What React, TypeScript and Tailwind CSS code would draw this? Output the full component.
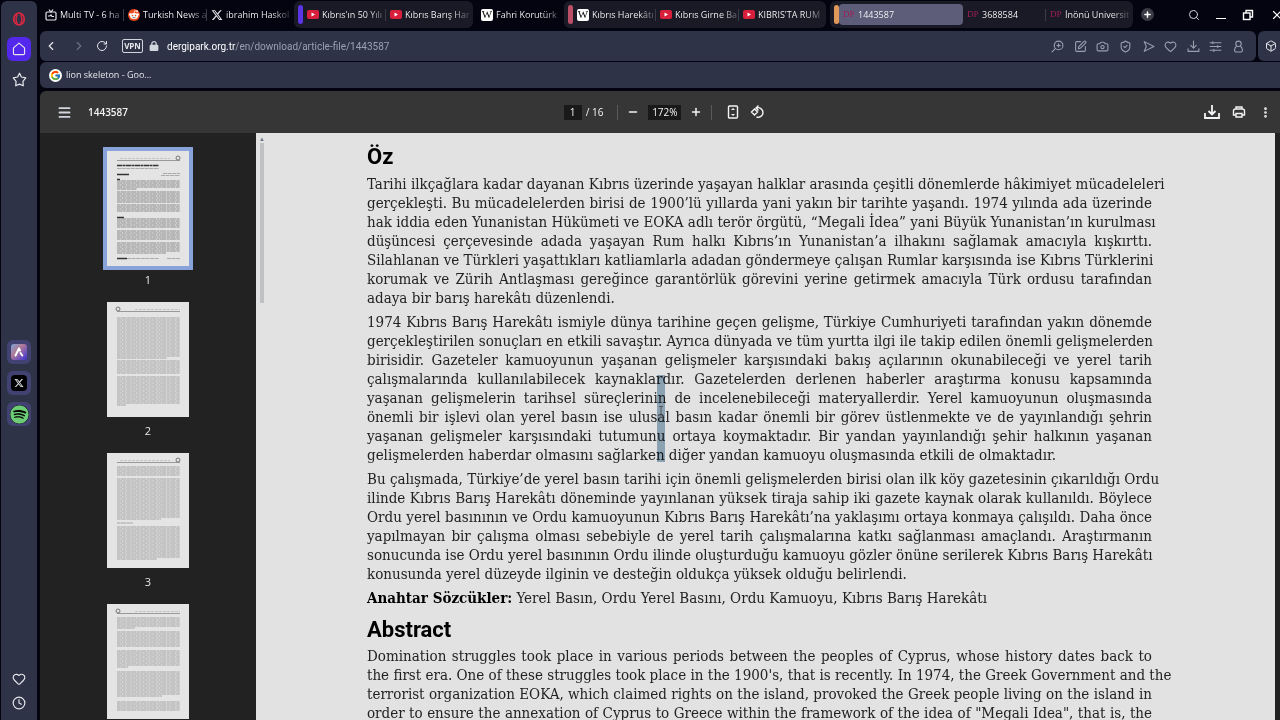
import type { ReactNode } from "react";
import {
  Box,
  Camera,
  ChevronLeft,
  ChevronRight,
  Clock,
  EllipsisVertical,
  Heart,
  Menu,
  Minus,
  Plus,
  RotateCw,
  Search,
  ShieldCheck,
  SquarePen,
  X,
} from "lucide-react";
import { FaLock, FaSpotify, FaXTwitter } from "react-icons/fa6";
import { FcGoogle } from "react-icons/fc";

type Site = "tv" | "reddit" | "x" | "youtube" | "wiki" | "dp";

type Tab = { site: Site; title: string; active?: boolean; divider?: boolean };

const looseTabs: Tab[] = [
  { site: "tv", title: "Multi TV - 6 ha", divider: true },
  { site: "reddit", title: "Turkish News a", divider: true },
  { site: "x", title: "ibrahim Haskol" },
];

const purpleTabs: Tab[] = [
  { site: "youtube", title: "Kıbrıs'ın 50 Yılı", divider: true },
  { site: "youtube", title: "Kıbrıs Barış Har" },
];

const roseTabs: Tab[] = [
  { site: "wiki", title: "Kıbrıs Harekâtı", divider: true },
  { site: "youtube", title: "Kıbrıs Girne Ba", divider: true },
  { site: "youtube", title: "KIBRIS'TA RUM" },
];

const orangeTabs: Tab[] = [
  { site: "dp", title: "1443587", active: true },
  { site: "dp", title: "3688584", divider: true },
  { site: "dp", title: "İnönü Universit" },
];

const ozLines = [
  "Tarihi ilkçağlara kadar dayanan Kıbrıs üzerinde yaşayan halklar arasında çeşitli dönemlerde hâkimiyet mücadeleleri",
  "gerçekleşti. Bu mücadelelerden birisi de 1900’lü yıllarda yani yakın bir tarihte yaşandı. 1974 yılında ada üzerinde",
  "hak iddia eden Yunanistan Hükümeti ve EOKA adlı terör örgütü, “Megali İdea” yani Büyük Yunanistan’ın kurulması",
  "düşüncesi çerçevesinde adada yaşayan Rum halkı Kıbrıs’ın Yunanistan’a ilhakını sağlamak amacıyla kışkırttı.",
  "Silahlanan ve Türkleri yaşattıkları katliamlarla adadan göndermeye çalışan Rumlar karşısında ise Kıbrıs Türklerini",
  "korumak ve Zürih Antlaşması gereğince garantörlük görevini yerine getirmek amacıyla Türk ordusu tarafından",
  "adaya bir barış harekâtı düzenlendi.",
];

const pressLines = [
  "1974 Kıbrıs Barış Harekâtı ismiyle dünya tarihine geçen gelişme, Türkiye Cumhuriyeti tarafından yakın dönemde",
  "gerçekleştirilen sonuçları en etkili savaştır. Ayrıca dünyada ve tüm yurtta ilgi ile takip edilen önemli gelişmelerden",
  "birisidir. Gazeteler kamuoyunun yaşanan gelişmeler karşısındaki bakış açılarının okunabileceği ve yerel tarih",
  "çalışmalarında kullanılabilecek kaynaklardır. Gazetelerden derlenen haberler araştırma konusu kapsamında",
  "yaşanan gelişmelerin tarihsel süreçlerinin de incelenebileceği materyallerdir. Yerel kamuoyunun oluşmasında",
  "önemli bir işlevi olan yerel basın ise ulusal basın kadar önemli bir görev üstlenmekte ve de yayınlandığı şehrin",
  "yaşanan gelişmeler karşısındaki tutumunu ortaya koymaktadır. Bir yandan yayınlandığı şehir halkının yaşanan",
  "gelişmelerden haberdar olmasını sağlarken diğer yandan kamuoyu oluşmasında etkili de olmaktadır.",
];

const orduLines = [
  "Bu çalışmada, Türkiye’de yerel basın tarihi için önemli gelişmelerden birisi olan ilk köy gazetesinin çıkarıldığı Ordu",
  "ilinde Kıbrıs Barış Harekâtı döneminde yayınlanan yüksek tiraja sahip iki gazete kaynak olarak kullanıldı. Böylece",
  "Ordu yerel basınının ve Ordu kamuoyunun Kıbrıs Barış Harekâtı’na yaklaşımı ortaya konmaya çalışıldı. Daha önce",
  "yapılmayan bir çalışma olması sebebiyle de yerel tarih çalışmalarına katkı sağlanması amaçlandı. Araştırmanın",
  "sonucunda ise Ordu yerel basınının Ordu ilinde oluşturduğu kamuoyu gözler önüne serilerek Kıbrıs Barış Harekâtı",
  "konusunda yerel düzeyde ilginin ve desteğin oldukça yüksek olduğu belirlendi.",
];

const abstractLines = [
  "Domination struggles took place in various periods between the peoples of Cyprus, whose history dates back to",
  "the first era. One of these struggles took place in the 1900's, that is recently. In 1974, the Greek Government and the",
  "terrorist organization EOKA, which claimed rights on the island, provoked the Greek people living on the island in",
  "order to ensure the annexation of Cyprus to Greece within the framework of the idea of \"Megali Idea\", that is, the",
];

function SiteIcon({ site }: { site: Site }) {
  if (site === "youtube") {
    return (
      <svg viewBox="0 0 24 18" className="w-3 shrink-0">
        <rect width="24" height="18" rx="4" fill="#d81f3c" />
        <path d="M9 5l7 4-7 4z" fill="#fff" />
      </svg>
    );
  }
  if (site === "wiki") {
    return (
      <span className="flex size-3 shrink-0 items-center justify-center rounded-xs bg-white font-['Liberation_Serif',serif] text-[11px] leading-none text-black">
        W
      </span>
    );
  }
  if (site === "dp") {
    return (
      <span className="w-3 shrink-0 font-['Liberation_Serif',serif] text-[9px] leading-none text-[#a01d55]">DP</span>
    );
  }
  if (site === "reddit") {
    return (
      <svg viewBox="0 0 24 24" className="size-3 shrink-0">
        <circle cx="12" cy="12" r="12" fill="#ee4a1d" />
        <circle cx="4.5" cy="11" r="2.5" fill="#fff" />
        <circle cx="19.5" cy="11" r="2.5" fill="#fff" />
        <ellipse cx="12" cy="14" rx="8" ry="6" fill="#fff" />
        <path d="M12 8l1.500-4.500 4 1" fill="none" stroke="#fff" strokeWidth="1.500" />
        <circle cx="18" cy="4.500" r="1.800" fill="#fff" />
        <circle cx="9" cy="13" r="1.600" fill="#ee4a1d" />
        <circle cx="15" cy="13" r="1.600" fill="#ee4a1d" />
        <path d="M9 16.500q3 2 6 0" fill="none" stroke="#222" strokeWidth="1.200" />
      </svg>
    );
  }
  if (site === "x") {
    return <FaXTwitter className="size-3 shrink-0 text-gray-200" />;
  }
  return (
    <svg viewBox="0 0 24 24" fill="none" stroke="#e5e7eb" strokeWidth="2.4" className="size-3 shrink-0">
      <rect x="2" y="6" width="20" height="16" rx="2.500" />
      <path d="M8 1l4 5 4-5M6 14h4l2-2 2 3h4" />
    </svg>
  );
}

function TabItem({ tab }: { tab: Tab }) {
  return (
    <button
      className={`relative flex h-[21px] shrink-0 items-center gap-[3px] pl-1 text-left ${
        tab.active ? "w-[124px] rounded-sm bg-[#5e5d79]" : "w-[83px]"
      }`}
    >
      <SiteIcon site={tab.site} />
      <span className="bg-[linear-gradient(to_right,white_46px,transparent_68px)] bg-clip-text whitespace-nowrap text-transparent">
        {tab.title}
      </span>
      {tab.divider && <span className="absolute right-0 h-3 w-px bg-[#3b3b48]" />}
    </button>
  );
}

function TabIsland({ tabs, marker }: { tabs: Tab[]; marker: string }) {
  return (
    <div className="flex h-[27px] shrink-0 items-center rounded-md bg-[#1a1a26] px-1">
      <span className={`h-[19px] w-[5px] rounded-sm ${marker}`} />
      {tabs.map((tab) => (
        <TabItem key={tab.title} tab={tab} />
      ))}
    </div>
  );
}

function TabStrip() {
  return (
    <header className="flex h-[31px] shrink-0 items-center overflow-hidden pb-0.5 text-[9px] font-medium text-white">
      <nav aria-label="Tabs" className="flex shrink-0 items-center gap-1 pl-px">
        <div className="flex">
          {looseTabs.map((tab) => (
            <TabItem key={tab.title} tab={tab} />
          ))}
        </div>
        <TabIsland tabs={purpleTabs} marker="bg-[#5b34e6]" />
        <TabItem tab={{ site: "wiki", title: "Fahri Korutürk" }} />
        <TabIsland tabs={roseTabs} marker="bg-[#bb4f68]" />
        <TabIsland tabs={orangeTabs} marker="bg-[#e0985a]" />
      </nav>
      <button aria-label="New tab" className="ml-2 flex size-[13px] shrink-0 items-center justify-center rounded-full bg-[#3a3b45]">
        <Plus className="size-[9px]" strokeWidth={4} />
      </button>
      <div className="-mr-1 ml-auto flex shrink-0 items-center gap-4">
        <button aria-label="Search tabs">
          <Search className="size-3 text-gray-300" />
        </button>
        <button aria-label="Minimize" className="flex h-2 w-[10px] items-end">
          <span className="h-px w-full bg-white" />
        </button>
        <button aria-label="Restore">
          <svg viewBox="0 0 12 12" fill="none" stroke="white" strokeWidth="1.400" className="size-3">
            <rect x="1.500" y="4" width="6.500" height="6.500" />
            <path d="M4 4V1.500h6.500V8H8" />
          </svg>
        </button>
        <button aria-label="Close">
          <X className="size-[14px]" />
        </button>
      </div>
    </header>
  );
}

function Stroke({ children, className = "size-[13px]" }: { children: ReactNode; className?: string }) {
  return (
    <svg
      viewBox="0 0 24 24"
      fill="none"
      stroke="currentColor"
      strokeWidth="2"
      strokeLinecap="round"
      strokeLinejoin="round"
      className={className}
    >
      {children}
    </svg>
  );
}

const addressActions = [
  {
    label: "Zoom",
    icon: (
      <Stroke>
        <circle cx="14" cy="10" r="8" />
        <path d="M8 16l-6 6M14 7v6M11 10h6" />
      </Stroke>
    ),
  },
  { label: "Edit page", icon: <SquarePen className="size-[13px]" /> },
  { label: "Snapshot", icon: <Camera className="size-[13px]" /> },
  { label: "Ad blocker", icon: <ShieldCheck className="size-[13px]" /> },
  {
    label: "Send to Flow",
    icon: (
      <Stroke>
        <path d="M4 3l18 9-18 9 4-9z" />
      </Stroke>
    ),
  },
  { label: "Add to favorites", icon: <Heart className="size-[13px]" /> },
  {
    label: "Downloads",
    icon: (
      <Stroke>
        <path d="M12 2v13M7 10l5 5 5-5M2 16v5h20v-5" />
      </Stroke>
    ),
  },
  {
    label: "Easy setup",
    icon: (
      <Stroke>
        <path d="M2 5h20M2 12h20M2 19h20M7 3v4M16 10v4M9 17v4" />
      </Stroke>
    ),
  },
  {
    label: "Profile",
    icon: (
      <Stroke>
        <circle cx="12" cy="7" r="5" />
        <path d="M8 12c-4 3-4 10-1 10h10c3 0 3-7-1-10" />
      </Stroke>
    ),
  },
];

function AddressBar() {
  return (
    <div className="flex h-[30px] shrink-0 gap-0.5 text-gray-200">
      <div className="flex min-w-0 flex-1 items-center rounded-md bg-[#2e3348] pr-[11px] pl-1">
        <button aria-label="Back">
          <ChevronLeft className="size-[14px]" />
        </button>
        <button aria-label="Forward" className="ml-3.5 text-gray-500">
          <ChevronRight className="size-[14px]" />
        </button>
        <button aria-label="Reload" className="ml-2.5">
          <RotateCw className="size-3" />
        </button>
        <button className="ml-3.5 flex h-[14px] w-[21px] items-center justify-center rounded-xs border border-gray-300 text-[8px] font-bold">
          VPN
        </button>
        <FaLock className="ml-1.5 size-[10px] text-gray-300" />
        <a
          href="https://dergipark.org.tr/en/download/article-file/1443587"
          className="ml-2 truncate font-['Roboto',sans-serif] text-[10px] text-gray-400"
        >
          <span className="text-white">dergipark.org.tr</span>/en/download/article-file/1443587
        </a>
        <div className="ml-auto flex w-[194px] shrink-0 justify-between text-gray-400">
          {addressActions.map((action) => (
            <button key={action.label} aria-label={action.label}>
              {action.icon}
            </button>
          ))}
        </div>
      </div>
      <button aria-label="Extensions" className="w-[22px] rounded-l-md bg-[#2e3348] pl-[7px]">
        <Box className="size-3" />
      </button>
    </div>
  );
}

function Spark() {
  return (
    <svg viewBox="0 0 16 16" className="size-4">
      <defs>
        <linearGradient id="aria" x1="0" y1="0" x2="1" y2="1">
          <stop offset="0" stopColor="#7fa6d8" />
          <stop offset="0.400" stopColor="#b07a96" />
          <stop offset="1" stopColor="#3b30d8" />
        </linearGradient>
      </defs>
      <rect width="16" height="16" rx="3" fill="url(#aria)" />
      <path d="M8 4.500L4.500 11.500M8 4.500l1 2M9.500 9l1.800 2.500" stroke="white" strokeWidth="2" strokeLinecap="round" />
    </svg>
  );
}

function SideRail() {
  return (
    <aside className="mt-px ml-px flex w-9 shrink-0 flex-col items-center rounded-t-md bg-[#2e3348] pt-[11px] pb-2.5 text-gray-200">
      <button aria-label="Opera menu">
        <svg viewBox="0 0 24 24" className="size-[14px]">
          <ellipse cx="12" cy="12" rx="9" ry="10" fill="none" stroke="#d8283f" strokeWidth="3" />
          <path d="M9 4q-4 8 0 16M15 4q4 8 0 16" fill="none" stroke="#d8283f" strokeWidth="2.500" />
        </svg>
      </button>
      <button aria-label="Home" className="mt-[11px] flex size-6 items-center justify-center rounded-md bg-[#5427ec]">
        <Stroke className="size-[14px]">
          <path d="M12 2L2.500 10v9.500q0 2 2 2h15q2 0 2-2V10z" />
        </Stroke>
      </button>
      <button aria-label="Bookmarks" className="mt-[11px]">
        <Stroke className="size-[15px]">
          <path d="M12 2l3 6 7 1.500-4.500 5.500.5 7-6-2.500L6 22l.5-7L2 9.500 9 8z" />
        </Stroke>
      </button>
      <div className="mt-[253px] flex flex-col gap-[7px]">
        <button aria-label="Aria" className="flex size-6 items-center justify-center rounded-md bg-[#424272]">
          <Spark />
        </button>
        <button aria-label="X" className="flex size-6 items-center justify-center rounded-md bg-[#424272]">
          <span className="flex size-4 items-center justify-center rounded-sm bg-black">
            <FaXTwitter className="size-2.5" />
          </span>
        </button>
        <button aria-label="Spotify" className="flex size-6 items-center justify-center rounded-md bg-[#424272]">
          <FaSpotify className="size-[19px] rounded-full bg-black text-[#6ccb75]" />
        </button>
      </div>
      <button aria-label="Favorites" className="mt-auto">
        <Heart className="size-[14px]" />
      </button>
      <button aria-label="History" className="mt-2.5">
        <Clock className="size-[14px]" />
      </button>
    </aside>
  );
}

function PdfToolbar() {
  return (
    <div className="flex h-[42px] shrink-0 items-center rounded-tl-md bg-[#363636] text-[10px] text-gray-100">
      <div className="flex flex-1 items-center gap-4 pl-4">
        <button aria-label="Toggle sidebar" className="flex w-4 justify-center">
          <Menu className="size-[15px] text-gray-300" strokeWidth={3} />
        </button>
        <h1 className="font-semibold">1443587</h1>
      </div>
      <div className="flex items-center">
        <input
          aria-label="Page number"
          defaultValue="1"
          className="h-[15px] w-[18px] bg-[#191919] text-center outline-none"
        />
        <span className="ml-1">/ 16</span>
        <span className="ml-3.5 h-[15px] w-px bg-[#5a5a5a]" />
        <button aria-label="Zoom out" className="ml-[9px]">
          <Minus className="size-3" strokeWidth={3} />
        </button>
        <input
          aria-label="Zoom level"
          defaultValue="172%"
          className="ml-[9px] h-[15px] w-[33px] bg-[#191919] text-center outline-none"
        />
        <button aria-label="Zoom in" className="ml-[9px]">
          <Plus className="size-3" strokeWidth={3} />
        </button>
        <span className="ml-[9px] h-[15px] w-px bg-[#5a5a5a]" />
        <button aria-label="Fit to page" className="ml-3.5">
          <svg viewBox="0 0 14 14" fill="none" stroke="currentColor" strokeWidth="1.400" className="size-[14px]">
            <rect x="2.500" y="1" width="9" height="12" rx="1" />
            <path d="M7 3l2 2H5zM7 11l2-2H5z" fill="currentColor" stroke="none" />
          </svg>
        </button>
        <button aria-label="Rotate counterclockwise" className="ml-2.5">
          <svg viewBox="0 0 14 14" fill="none" stroke="currentColor" strokeWidth="1.400" className="size-[14px]">
            <path d="M4.500 4L7.500 7l-3 3-3-3zM6.500 3a4.800 4.800 0 1 1 0 9M8.500.5L6 3l2.500 2.500" />
          </svg>
        </button>
      </div>
      <div className="flex flex-1 items-center justify-end pr-2">
        <button aria-label="Download">
          <svg viewBox="0 0 16 16" fill="none" stroke="currentColor" strokeWidth="1.800" className="size-4">
            <path d="M8 1v9M4.500 7L8 10.500 11.500 7M1 9v5h14V9" />
          </svg>
        </button>
        <button aria-label="Print" className="ml-3">
          <svg viewBox="0 0 14 14" fill="none" stroke="currentColor" strokeWidth="1.400" className="size-[14px]">
            <path d="M4 4V2h6v2M4 10H1.500V6q0-2 2-2h7q2 0 2 2v4H10M4 8.500h6V12H4z" />
          </svg>
        </button>
        <button aria-label="More actions" className="ml-[13px]">
          <EllipsisVertical className="size-[13px]" strokeWidth={3} />
        </button>
      </div>
    </div>
  );
}

// Each block is [top, bottom, width of its closing line] on an 82x115 page.
type Block = [number, number, number];

const thumbs: { page: number; blocks: Block[]; cover?: boolean }[] = [
  {
    page: 1,
    cover: true,
    blocks: [
      [30, 40, 20],
      [41, 53, 63],
      [54, 63, 50],
      [68, 79, 44],
      [80, 91, 22],
      [92, 104, 49],
    ],
  },
  { page: 2, blocks: [[16, 58, 50], [59, 74, 63], [75, 105, 9]] },
  { page: 3, blocks: [[14, 25, 56], [26, 68, 44], [70, 72, 16], [74, 108, 40]] },
  { page: 4, blocks: [[14, 26, 18], [28, 45, 52], [47, 65, 11], [68, 94, 45], [98, 108, 63]] },
];

function PageThumb({ page, blocks, cover }: { page: number; blocks: Block[]; cover?: boolean }) {
  const even = page % 2 === 0;
  return (
    <svg viewBox="0 0 82 115" className="h-[115px] w-[82px]">
      <rect width="82" height="115" fill="#e4e4e4" />
      <path d="M10 9.500h63" stroke="#999" strokeWidth="1" />
      <path d={even ? "M28 7.500h45" : "M13 7.500h50"} stroke="#c4c4c4" strokeWidth="1" strokeDasharray="3 1" />
      <circle cx={even ? 11 : 71} cy="7" r="2" fill="none" stroke="#777" />
      {cover && (
        <g fill="none">
          <path d="M10 23.500h12M10 28.500h3M10 66.500h7M10 107.500h10" stroke="#333" strokeWidth="1.500" />
          <path d="M10 14.500h42" stroke="#333" strokeWidth="1.500" strokeDasharray="5 .5 3 .5" />
          <path d="M10 17.500h42M56 22.500h17M54 24.500h19M20 107.500h32M60 107.500h13" stroke="#aaa" strokeDasharray="4 .6" />
        </g>
      )}
      {blocks.map(([top, bottom, last]) => (
        <g key={top} stroke={cover ? "#8a8a8a" : "#a3a3a3"} strokeWidth="1.100">
          {Array.from({ length: Math.floor((bottom - top) / 2) }, (_, i) => (
            <path
              key={i}
              d={`M10 ${top + i * 2}h${top + i * 2 + 3 > bottom ? last : 63}`}
              strokeDasharray={i % 2 ? "5 .5 3 .4" : "3 .4 6 .5"}
            />
          ))}
        </g>
      ))}
    </svg>
  );
}

function ThumbnailPane() {
  return (
    <nav aria-label="Pages" className="flex w-[216px] shrink-0 flex-col items-center gap-2 overflow-hidden bg-[#222222] pt-[18px]">
      {thumbs.map((thumb) => (
        <button key={thumb.page} className="flex shrink-0 flex-col items-center gap-1">
          <span className={thumb.page === 1 ? "outline-4 outline-[#87a3da]" : ""}>
            <PageThumb {...thumb} />
          </span>
          <span className="h-6 pt-0.5 text-[11px] leading-4 text-gray-200">{thumb.page}</span>
        </button>
      ))}
    </nav>
  );
}

function Paragraph({ lines, open }: { lines: string[]; open?: boolean }) {
  return (
    <p className="mb-[5px]">
      {lines.map((line, i) => (
        <span
          key={line}
          className={`block whitespace-nowrap ${open || i < lines.length - 1 ? "[text-align-last:justify]" : ""}`}
        >
          {line}{" "}
        </span>
      ))}
    </p>
  );
}

function Article() {
  return (
    <article className="w-[785px] font-['DejaVu_Serif_Condensed','Liberation_Serif',serif] text-[15px] leading-[19px] text-[#222222]">
      <h2 className="mb-1 pt-px font-['Roboto',sans-serif] text-[22px] leading-7 font-bold text-black">Öz</h2>
      <Paragraph lines={ozLines} />
      <div className="relative">
        <Paragraph lines={pressLines} />
        <span className="absolute top-[62px] left-[290px] h-[87px] w-2 bg-[#9db7ca] mix-blend-multiply" />
        <svg viewBox="0 0 6 12" className="absolute top-[93px] left-[291px] h-3 w-1.5" stroke="#555" fill="none">
          <path d="M1 .5h4M3 .5v11M1 11.500h4" />
        </svg>
      </div>
      <Paragraph lines={orduLines} />
      <p>
        <strong className="text-black">Anahtar Sözcükler:</strong> Yerel Basın, Ordu Yerel Basını, Ordu Kamuoyu, Kıbrıs
        Barış Harekâtı
      </p>
      <h2 className="mt-2 mb-[3px] font-['Roboto',sans-serif] text-[22px] leading-7 font-bold text-black">Abstract</h2>
      <Paragraph lines={abstractLines} open />
    </article>
  );
}

export default function App() {
  return (
    <div className="flex h-screen overflow-hidden bg-[#03040f] font-['Open_Sans','Noto_Sans',sans-serif]">
      <SideRail />
      <div className="ml-[3px] flex min-w-0 flex-1 flex-col">
        <TabStrip />
        <AddressBar />
        <div className="mt-px mb-[3px] flex h-[26px] shrink-0 items-center rounded-l-md bg-[#2e3348] pl-[9px]">
          <a href="https://www.google.com" className="flex items-center gap-1 text-[9px] text-gray-200">
            <span className="flex size-[13px] items-center justify-center rounded-full bg-white">
              <FcGoogle className="size-[11px]" />
            </span>
            lion skeleton - Goo...
          </a>
        </div>
        <PdfToolbar />
        <div className="flex min-h-0 flex-1">
          <ThumbnailPane />
          <main className="flex min-w-0 flex-1 overflow-hidden border-r-[5px] border-[#222222] bg-[#e2e2e2]">
            <div className="flex w-3 shrink-0 flex-col items-center pt-0.5">
              <span className="text-[6px] leading-2 text-gray-500">▲</span>
              <span className="h-40 w-1 bg-[#c0c1c2]" />
            </div>
            <div className="flex min-w-0 flex-1 justify-center pt-[9px] pr-6">
              <Article />
            </div>
          </main>
        </div>
      </div>
    </div>
  );
}
